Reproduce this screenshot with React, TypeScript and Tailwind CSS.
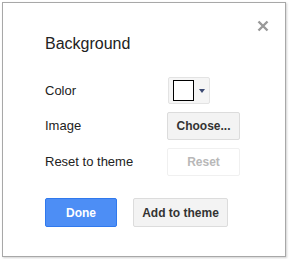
const font = { fontFamily: '"Liberation Sans", Arial, sans-serif' };

function ColorPicker() {
  return (
    <button className="ml-px flex h-[27px] w-[42px] items-center rounded-[2px] border border-[#e3e3e3] bg-[#f5f5f5] pl-[4px]">
      <span className="block h-[21px] w-[21px] border border-black bg-white" />
      <svg width="6" height="4" viewBox="0 0 6 4" className="ml-[5px]">
        <path d="M0 0 L6 0 L3 4 Z" fill="#3c4a73" />
      </svg>
    </button>
  );
}

export default function App() {
  return (
    <div className="bg-white p-[2px]" style={font}>
      <div className="relative h-[255px] w-[284px] border border-[#a8a8a8] bg-white pl-[42px] pt-[31px] shadow-[1px_1px_2px_rgba(0,0,0,0.18)]">
        {/* Close */}
        <button className="absolute right-[16px] top-[17px] h-[12px] w-[12px]">
          <svg width="12" height="12" viewBox="0 0 12 12">
            <path d="M1.5 1.5 L10.5 10.5 M10.5 1.5 L1.5 10.5" stroke="#999" strokeWidth="2.4" />
          </svg>
        </button>

        <h2 className="text-[16px] leading-[20px] text-[#222]">Background</h2>

        <div className="mt-[23px] grid grid-cols-[122px_auto] gap-y-[8px] text-[13px] text-[#222]">
          <div className="flex h-[27px] items-center">Color</div>
          <div className="flex items-center">
            <ColorPicker />
          </div>

          <div className="flex h-[28px] items-center">Image</div>
          <button className="h-[28px] w-[73px] rounded-[2px] border border-[#dcdcdc] bg-[#f3f3f3] text-[12px] font-bold text-[#333]">
            Choose...
          </button>

          <div className="flex h-[28px] items-center">Reset to theme</div>
          <button className="h-[28px] w-[73px] rounded-[2px] border border-[#f0f0f0] bg-white text-[12px] font-bold text-[#b8b8b8]">
            Reset
          </button>
        </div>

        <div className="mt-[22px] flex gap-[16px]">
          <button className="h-[29px] w-[72px] rounded-[2px] border border-[#3079ed] bg-[#4d8ef5] text-[12px] font-bold text-white">
            Done
          </button>
          <button className="h-[29px] w-[95px] rounded-[2px] border border-[#dcdcdc] bg-[#f3f3f3] text-[12px] font-bold text-[#333]">
            Add to theme
          </button>
        </div>
      </div>
    </div>
  );
}
